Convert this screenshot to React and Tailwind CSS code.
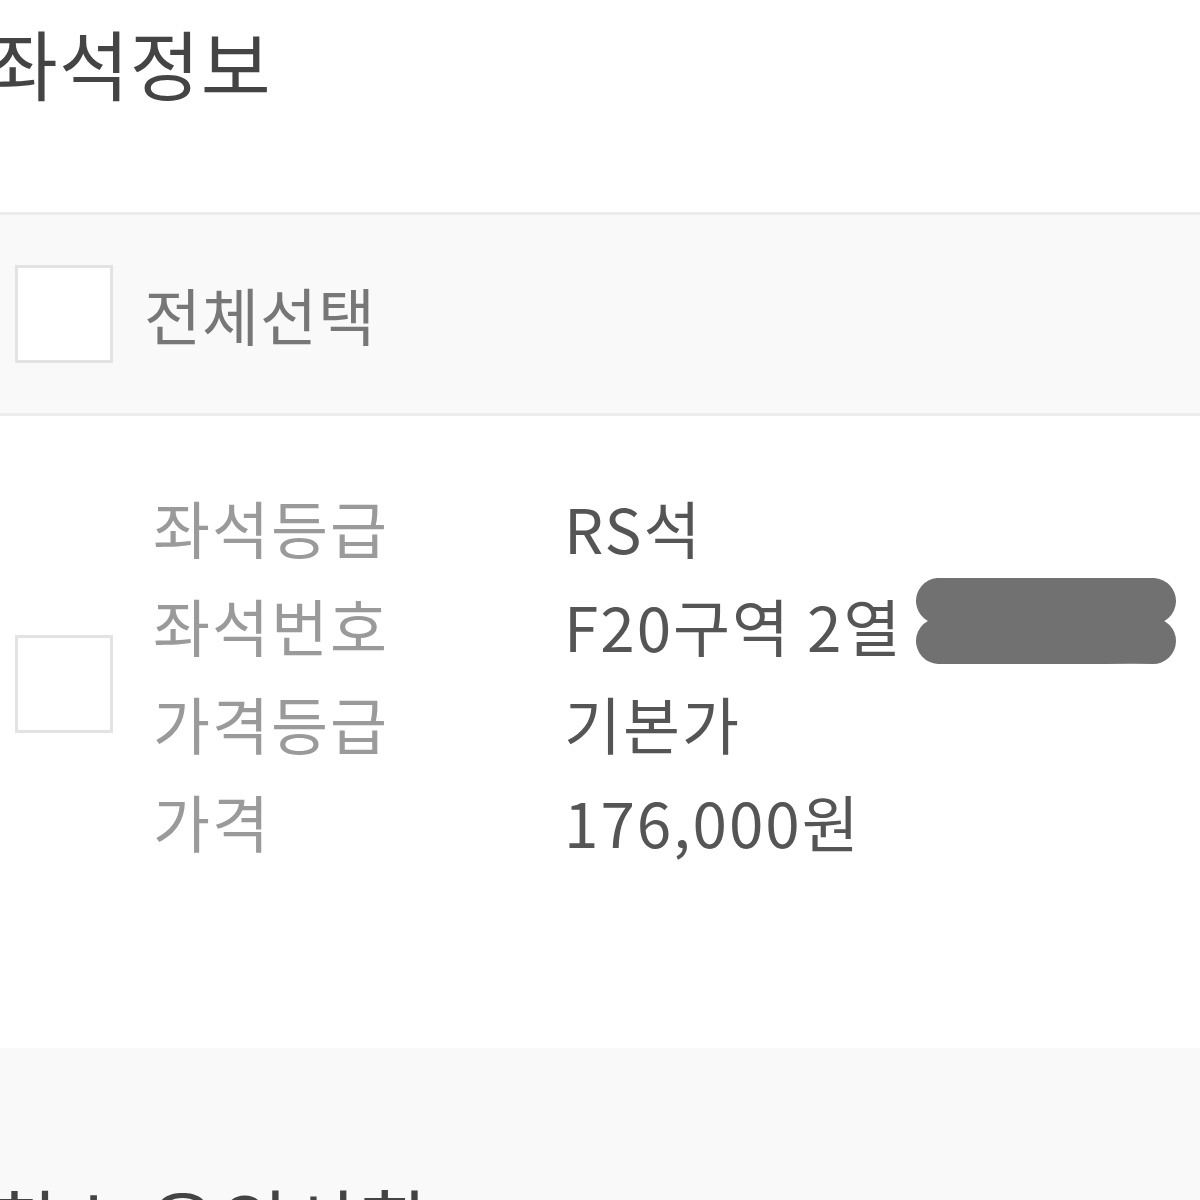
import React from 'react';

const font = { fontFamily: '"Noto Sans CJK KR", "Noto Sans", sans-serif' };

const rows = [
  { label: '좌석등급', value: 'RS석' },
  { label: '좌석번호', value: 'F20구역 2열', hidden: true },
  { label: '가격등급', value: '기본가' },
  { label: '가격', value: '176,000원' },
];

const Box = () => (
  <div className="w-[98px] h-[98px] shrink-0 border-[3px] border-[#e3e3e3] bg-white" />
);

const Scribble = () => (
  <svg width="260" height="86" viewBox="0 0 260 86" className="ml-[14px] shrink-0 relative -top-[4px]">
    <path d="M23 23 C80 18 170 20 237 23" stroke="#717171" strokeWidth="46" strokeLinecap="round" fill="none" />
    <path d="M23 63 C90 66 170 62 237 63" stroke="#717171" strokeWidth="46" strokeLinecap="round" fill="none" />
  </svg>
);

export default function App() {
  return (
    <div className="w-[1200px] h-[1200px] overflow-hidden bg-white" style={font}>
      <div className="h-[212px] -ml-[12px]">
        <h1 className="text-[76px] leading-[1] pt-[24px] tracking-[1px] text-[#444] font-normal">좌석정보</h1>
      </div>

      <div className="h-[204px] border-y-[3px] border-[#ededed] bg-[#f9f9f9] flex items-center pl-[15px]">
        <Box />
        <span className="ml-[31px] text-[62px] leading-[1] tracking-[1px] text-[#777]">전체선택</span>
      </div>

      <div className="h-[632px] flex items-start pl-[15px] pt-[62px]">
        <div className="pt-[157px]">
          <Box />
        </div>
        <div className="ml-[40px] flex flex-col">
          {rows.map((r) => (
            <div key={r.label} className="flex items-center h-[98px] text-[62px] leading-[98px]">
              <span className="w-[411px] tracking-[2px] text-[#9a9a9a]">{r.label}</span>
              <span className="text-[#555] tracking-[2px] whitespace-nowrap">{r.value}</span>
              {r.hidden && <Scribble />}
            </div>
          ))}
        </div>
      </div>

      <div className="h-[152px] bg-[#f9f9f9] -ml-[12px] pt-[135px]">
        <h2 className="text-[76px] leading-[1] tracking-[1px] text-[#444] font-normal whitespace-nowrap">취소 유의사항</h2>
      </div>
    </div>
  );
}
